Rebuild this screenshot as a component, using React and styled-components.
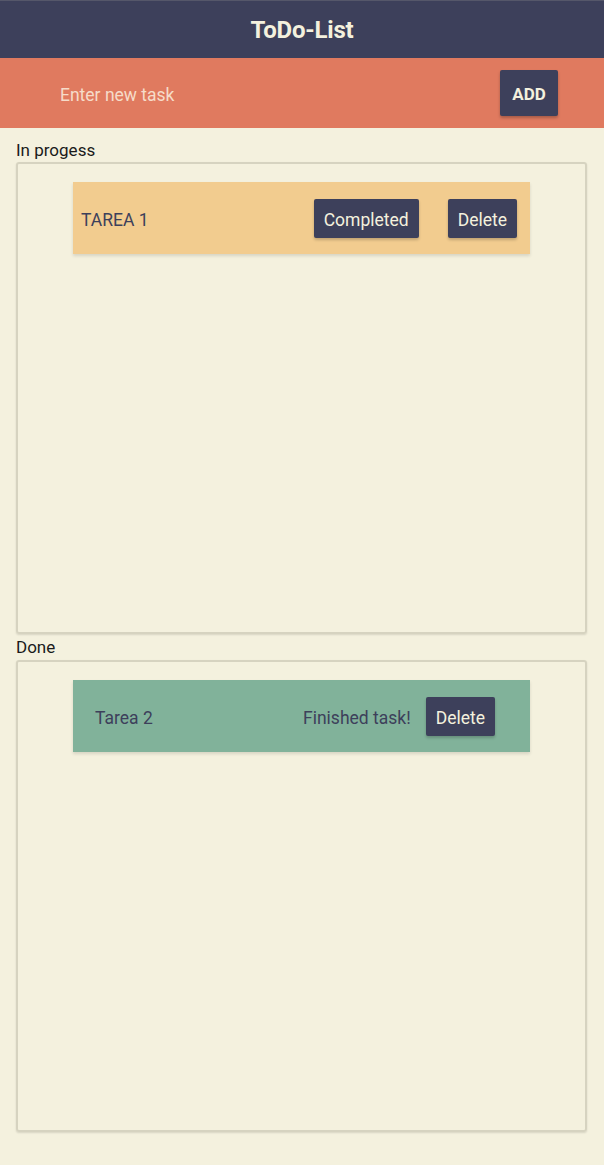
import React from "react";
import styled, { createGlobalStyle } from "styled-components";

const Global = createGlobalStyle`
  html, body { margin: 0; padding: 0; background: #f4f1de; }
  body { font-family: Roboto, "Noto Sans", sans-serif; }
  * { box-sizing: border-box; }
`;

const Page = styled.div`
  width: 604px;
  min-height: 1165px;
  background: #f4f1de;
  display: flex;
  flex-direction: column;
`;

const Header = styled.header`
  height: 58px;
  background: #3d405b;
  border-top: 1px solid #55576a;
  display: flex;
  align-items: center;
  justify-content: center;
`;

const Title = styled.h1`
  margin: 0;
  color: #f4f1de;
  font-size: 24px;
  font-weight: 700;
  letter-spacing: -0.2px;
`;

const InputBar = styled.form`
  height: 70px;
  background: #e07a5f;
  display: flex;
  align-items: center;
  padding: 0 46px 0 60px;
  gap: 12px;
`;

const TaskInput = styled.input`
  flex: 1;
  border: none;
  background: transparent;
  font-family: inherit;
  font-size: 17.5px;
  color: #f4f1de;
  padding: 3px 0 0 0;
  outline: none;
  &::placeholder { color: #f6dcc9; opacity: 1; }
`;

const AddButton = styled.button`
  width: 58px;
  height: 46px;
  border: none;
  border-radius: 2px;
  background: #3d405b;
  color: #f4f1de;
  font-family: inherit;
  font-weight: 700;
  font-size: 17px;
  box-shadow: 0 2px 3px rgba(0,0,0,0.25);
  padding: 2px 0 0 0;
`;

const Main = styled.main`
  display: flex;
  flex-direction: column;
  padding: 0 17px 0 16px;
`;

const SectionLabel = styled.div`
  font-size: 17px;
  color: #1a1a1a;
  display: flex;
  align-items: flex-end;
  line-height: 1;
  height: ${p => p.$h}px;
  padding-bottom: ${p => p.$pb}px;
`;

const Box = styled.section`
  height: 472px;
  border: 2px solid #d6d3c0;
  border-radius: 3px;
  box-shadow: 0 1px 2px rgba(0,0,0,0.12);
  display: flex;
  flex-direction: column;
  align-items: center;
  padding-top: 18px;
`;

const Card = styled.div`
  width: 457px;
  height: 72px;
  background: ${p => p.$bg};
  box-shadow: 0 2px 3px rgba(0,0,0,0.12);
  display: flex;
  align-items: center;
  padding: 0 ${p => p.$pr}px 0 ${p => p.$pl}px;
`;

const TaskText = styled.span`
  flex: 1;
  color: #3d405b;
  font-size: 17.5px;
  padding-top: 3px;
`;

const Status = styled.span`
  color: #3d405b;
  font-size: 17.5px;
  margin-right: 15px;
  padding-top: 3px;
`;

const ActionButton = styled.button`
  height: 39px;
  padding: 3px 10px 0;
  border: none;
  border-radius: 2px;
  background: #3d405b;
  color: #f4f1de;
  font-family: inherit;
  font-size: 17.5px;
  box-shadow: 0 2px 3px rgba(0,0,0,0.2);
  margin-left: ${p => p.$ml || 0}px;
`;

export default function App() {
  return (
    <Page>
      <Global />
      <Header>
        <Title>ToDo-List</Title>
      </Header>
      <InputBar onSubmit={e => e.preventDefault()}>
        <TaskInput placeholder="Enter new task" />
        <AddButton type="submit">ADD</AddButton>
      </InputBar>
      <Main>
        <SectionLabel $h={34} $pb={3}>In progess</SectionLabel>
        <Box>
          <Card $bg="#f2cc8f" $pl={8} $pr={13}>
            <TaskText>TAREA 1</TaskText>
            <ActionButton>Completed</ActionButton>
            <ActionButton $ml={29}>Delete</ActionButton>
          </Card>
        </Box>
        <SectionLabel $h={26} $pb={4}>Done</SectionLabel>
        <Box>
          <Card $bg="#81b29a" $pl={22} $pr={35}>
            <TaskText>Tarea 2</TaskText>
            <Status>Finished task!</Status>
            <ActionButton>Delete</ActionButton>
          </Card>
        </Box>
      </Main>
    </Page>
  );
}
